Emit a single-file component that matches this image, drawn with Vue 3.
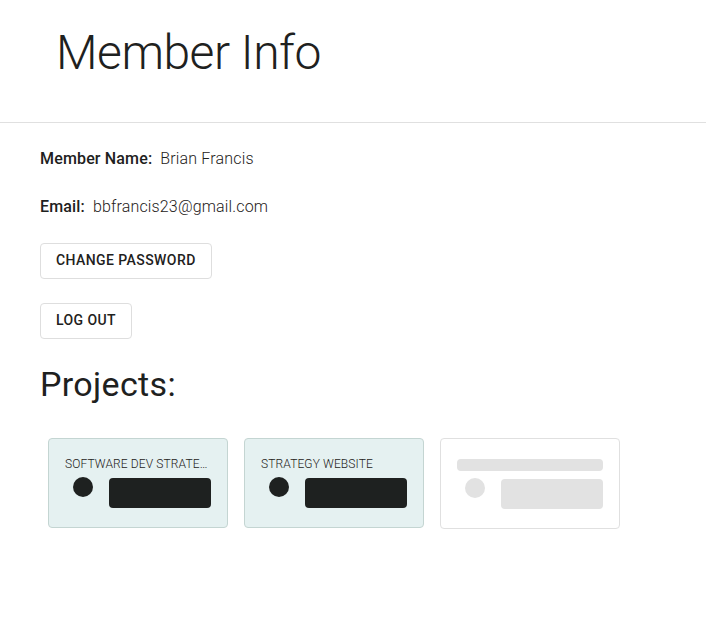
<script setup>
const projects = ['Software Dev Strategy', 'Strategy Website']
</script>

<template>
  <main class="page">
    <header class="header">
      <h1>Member Info</h1>
    </header>
    <section class="content">
      <p class="field"><b>Member Name:</b><span>Brian Francis</span></p>
      <p class="field"><b>Email:</b><span>bbfrancis23@gmail.com</span></p>
      <button class="btn" type="button">Change Password</button>
      <button class="btn" type="button">Log Out</button>
      <h2>Projects:</h2>
      <div class="cards">
        <article v-for="name in projects" :key="name" class="card">
          <h3>{{ name }}</h3>
          <div class="row"><i class="dot"></i><i class="block"></i></div>
        </article>
        <article class="card skeleton">
          <i class="bar"></i>
          <div class="row"><i class="dot"></i><i class="block"></i></div>
        </article>
      </div>
    </section>
  </main>
</template>

<style>
body {
  margin: 0;
  background: #fff;
}
</style>

<style scoped>
.page {
  font-family: Roboto, "Liberation Sans", sans-serif;
  color: #1e2120;
}
.header {
  padding: 25px 56px 41px;
  border-bottom: 1px solid #e0e0e0;
}
h1 {
  margin: 0;
  font-size: 48px;
  line-height: 56px;
  font-weight: 300;
  letter-spacing: -0.01em;
}
.content {
  display: flex;
  flex-direction: column;
  align-items: flex-start;
  gap: 24px;
  padding: 24px 40px;
}
.field {
  display: flex;
  gap: 8px;
  margin: 0;
  font-size: 16px;
  line-height: 24px;
  letter-spacing: 0.01em;
}
.field b {
  font-weight: 500;
}
.field span {
  font-weight: 300;
}
.btn {
  padding: 4px 15px 6px;
  border: 1px solid #dedede;
  border-radius: 4px;
  background: #fff;
  color: inherit;
  font: 500 14px/24px Roboto, "Liberation Sans", sans-serif;
  letter-spacing: 0.03em;
  text-transform: uppercase;
}
h2 {
  margin: 0;
  font-size: 34px;
  line-height: 43px;
  font-weight: 400;
  letter-spacing: 0.01em;
}
.cards {
  display: flex;
  flex-wrap: wrap;
  align-items: flex-start;
  gap: 16px;
  padding: 8px;
}
.card {
  box-sizing: border-box;
  width: 180px;
  padding: 16px;
  border: 1px solid #c4d5d2;
  border-radius: 4px;
  background: #e5f1f1;
}
h3 {
  margin: 0;
  overflow: hidden;
  font-size: 12px;
  line-height: 18px;
  font-weight: 300;
  letter-spacing: 0.01em;
  text-overflow: ellipsis;
  text-transform: uppercase;
  white-space: nowrap;
}
.row {
  display: flex;
  justify-content: space-between;
  padding: 4px 0 3px 8px;
}
.dot {
  width: 20px;
  height: 20px;
  border-radius: 50%;
  background: #1e2120;
}
.block {
  width: 102px;
  height: 30px;
  margin-top: 1px;
  border-radius: 4px;
  background: #1e2120;
}
.skeleton {
  border-color: #e0e0e0;
  background: #fff;
}
.bar {
  display: block;
  height: 12px;
  margin: 4px 0 3px;
  border-radius: 4px;
  background: #e2e2e2;
}
.skeleton .dot,
.skeleton .block {
  background: #e2e2e2;
}
</style>
